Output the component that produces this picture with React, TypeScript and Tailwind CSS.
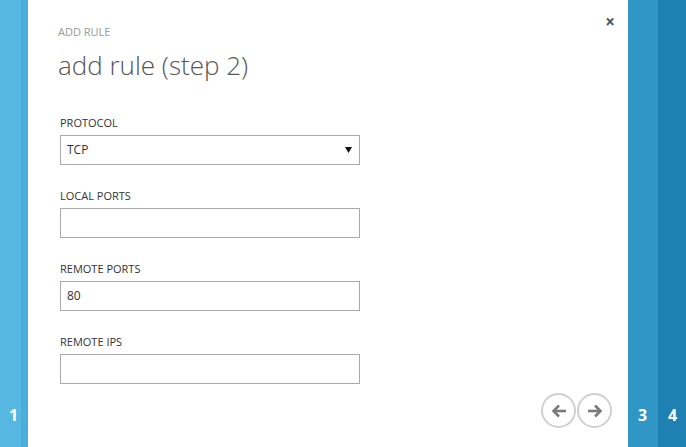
import React from 'react';

const fields = [
  { label: 'LOCAL PORTS', value: '' },
  { label: 'REMOTE PORTS', value: '80' },
  { label: 'REMOTE IPS', value: '' },
];

function CircleButton({ dir }: { dir: 'left' | 'right' }) {
  return (
    <button className="w-[35px] h-[35px] rounded-full border-2 border-[#d0d0d0] bg-white flex items-center justify-center">
      <svg width="16" height="14" viewBox="0 0 16 14" fill="none" stroke="#7a7a7a" strokeWidth="2.6" strokeLinecap="butt">
        {dir === 'left' ? (
          <>
            <path d="M15 7H3" />
            <path d="M8 1.5L2.5 7L8 12.5" />
          </>
        ) : (
          <>
            <path d="M1 7h12" />
            <path d="M8 1.5L13.5 7L8 12.5" />
          </>
        )}
      </svg>
    </button>
  );
}

export default function App() {
  return (
    <div className="flex w-[686px] h-[447px] overflow-hidden font-['Open_Sans',sans-serif] bg-white">
      {/* left step strip */}
      <div className="w-[28px] h-full flex flex-col justify-end bg-[linear-gradient(90deg,#55b7e2_0,#55b7e2_21px,#4aaedb_21px)]">
        <span className="pl-[9px] pb-[24px] text-white font-bold text-[16px] leading-none">1</span>
      </div>

      {/* main panel */}
      <div className="flex-1 relative flex flex-col pl-[30px]">
        <button className="absolute top-[13px] right-[13px] text-[#555] text-[17px] font-bold leading-none">×</button>

        <div className="pt-[25px] text-[11px] font-medium text-[#999] leading-[14px]">ADD RULE</div>
        <h1 className="mt-[10px] text-[26px] font-light text-[#555] leading-[32px]">add rule (step 2)</h1>

        <div className="mt-[35px] flex flex-col pl-[2px]">
          <label className="text-[11px] text-[#333] leading-[14px]">PROTOCOL</label>
          <div className="mt-[5px] w-[300px] h-[30px] border border-[#aaa] flex items-center justify-between pl-[6px] pr-[7px]">
            <span className="text-[12px] text-[#333]">TCP</span>
            <svg width="7" height="6" viewBox="0 0 7 6"><path d="M0 0h7L3.5 6z" fill="#111" /></svg>
          </div>

          {fields.map((f) => (
            <div key={f.label} className="mt-[24px] flex flex-col">
              <label className="text-[11px] text-[#333] leading-[14px]">{f.label}</label>
              <div className="mt-[5px] w-[300px] h-[30px] border border-[#aaa] flex items-center pl-[6px]">
                <span className="text-[12px] text-[#333]">{f.value}</span>
              </div>
            </div>
          ))}
        </div>

        <div className="mt-auto flex justify-end gap-[1px] pr-[16px] pb-[19px]">
          <CircleButton dir="left" />
          <CircleButton dir="right" />
        </div>
      </div>

      {/* right step strips */}
      <div className="w-[30px] h-full flex flex-col justify-end bg-[#3096c6]">
        <span className="pl-[10px] pb-[24px] text-white font-bold text-[16px] leading-none">3</span>
      </div>
      <div className="w-[28px] h-full flex flex-col justify-end bg-[#1f81b2]">
        <span className="pl-[10px] pb-[24px] text-white font-bold text-[16px] leading-none">4</span>
      </div>
    </div>
  );
}
